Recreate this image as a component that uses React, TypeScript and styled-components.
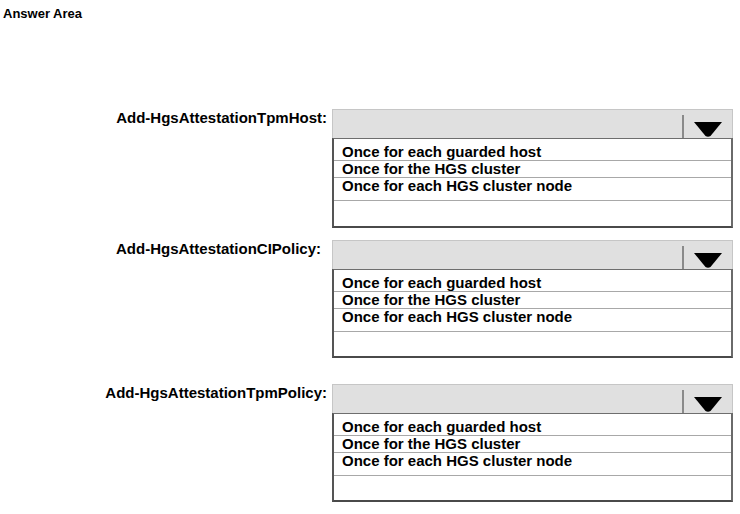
import { Fragment } from "react";
import styled, { createGlobalStyle } from "styled-components";

const GlobalStyle = createGlobalStyle`
  body {
    margin: 0;
    background: #ffffff;
    font-family: "Liberation Sans", Arial, sans-serif;
    color: #000000;
  }
`;

const Page = styled.div`
  padding: 6px 0 0 3px;
`;

const Title = styled.div`
  font-size: 13px;
  line-height: 15px;
  font-weight: 700;
`;

const Form = styled.div`
  display: grid;
  grid-template-columns: 324px 401px;
  column-gap: 5px;
  margin-top: 88px;
`;

const Label = styled.div<{ $top: number; $shift?: number }>`
  margin-top: ${(p) => p.$top + 1}px;
  padding-right: ${(p) => p.$shift ?? 0}px;
  text-align: right;
  font-size: 15px;
  line-height: 16px;
  font-weight: 700;
`;

const Dropdown = styled.div<{ $top: number; $listHeight: number }>`
  margin-top: ${(p) => p.$top}px;
  display: flex;
  flex-direction: column;
  .list {
    height: ${(p) => p.$listHeight}px;
  }
`;

const Header = styled.div`
  height: 28px;
  display: flex;
  justify-content: flex-end;
  align-items: flex-end;
  background: #e0e0e0;
  border: 1px solid #c6c6c6;
  border-bottom: none;
`;

const Toggle = styled.div`
  width: 50px;
  height: 23px;
  display: flex;
  justify-content: center;
  align-items: flex-end;
  padding-bottom: 1px;
  box-sizing: border-box;
  border-left: 2px solid #8a8a8a;
`;

const List = styled.div`
  display: flex;
  flex-direction: column;
  box-sizing: border-box;
  background: #ffffff;
  border-top: 1px solid #6e6e6e;
  border-left: 2px solid #555555;
  border-right: 2px solid #6a6a6a;
  border-bottom: 2px solid #4a4a4a;
`;

const Option = styled.div`
  padding: 0 8px;
  font-size: 15px;
  line-height: 16px;
  font-weight: 700;
  border-bottom: 1px solid #a8a8a8;
  &:first-child {
    padding-top: 5px;
  }
  &:nth-child(3) {
    padding-bottom: 6px;
  }
`;

const Filler = styled.div`
  flex: 1;
`;

const Arrow = () => (
  <svg width="28" height="15" viewBox="0 0 28 15">
    <path d="M0 0 H28 L16.5 14 Q14 15.5 11.5 14 Z" fill="#000" />
  </svg>
);

const choices = [
  "Once for each guarded host",
  "Once for the HGS cluster",
  "Once for each HGS cluster node",
];

const cmdlets = [
  { name: "Add-HgsAttestationTpmHost:", top: 0, list: 90, shift: 0 },
  { name: "Add-HgsAttestationCIPolicy:", top: 12, list: 89, shift: 6 },
  { name: "Add-HgsAttestationTpmPolicy:", top: 26, list: 89, shift: 0 },
];

const App = () => {
  return (
    <Page>
      <GlobalStyle />
      <Title>Answer Area</Title>
      <Form>
        {cmdlets.map((c) => (
          <Fragment key={c.name}>
            <Label $top={c.top} $shift={c.shift}>
              {c.name}
            </Label>
            <Dropdown $top={c.top} $listHeight={c.list}>
              <Header>
                <Toggle>
                  <Arrow />
                </Toggle>
              </Header>
              <List className="list">
                {choices.map((item) => (
                  <Option key={item}>{item}</Option>
                ))}
                <Filler />
              </List>
            </Dropdown>
          </Fragment>
        ))}
      </Form>
    </Page>
  );
};

export default App;
